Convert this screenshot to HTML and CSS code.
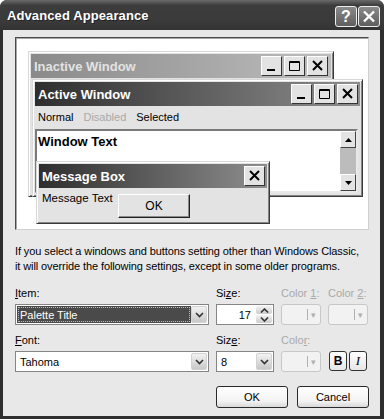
FILE: index.html
```html
<!DOCTYPE html>
<html lang="en">
<head>
  <meta charset="UTF-8">
  <title>Advanced Appearance</title>
  <link rel="stylesheet" href="styles.css">
</head>
<body>
  <div class="dialog">
    <div class="titlebar">
      <span class="title">Advanced Appearance</span>
      <div class="caption-btns">
        <span class="xp-btn help">?</span>
        <span class="xp-btn">
          <svg width="14" height="13" viewBox="0 0 14 13"><path d="M2 1.5 L12 11.5 M12 1.5 L2 11.5" stroke="#fff" stroke-width="2.4"/></svg>
        </span>
      </div>
    </div>

    <div class="body">
      <!-- preview desktop -->
      <div class="preview">
        <div class="win inactive">
          <div class="caption">
            <span>Inactive Window</span>
            <div class="cap-btns">
              <span class="cap-btn"><svg width="19" height="18" viewBox="0 0 19 18"><rect x="5" y="12" width="8" height="2" fill="#000"/></svg></span>
              <span class="cap-btn"><svg width="19" height="18" viewBox="0 0 19 18"><path d="M4.5 4.5 H14.5 V13.5 H4.5 Z M4.5 5.5 H14.5" fill="none" stroke="#000" stroke-width="1"/></svg></span>
              <span class="cap-btn"><svg width="19" height="18" viewBox="0 0 19 18"><path d="M5 4 L14 13 M14 4 L5 13" stroke="#000" stroke-width="2"/></svg></span>
            </div>
          </div>
        </div>

        <div class="win active">
          <div class="caption">
            <span>Active Window</span>
            <div class="cap-btns">
              <span class="cap-btn"><svg width="19" height="18" viewBox="0 0 19 18"><rect x="5" y="12" width="8" height="2" fill="#000"/></svg></span>
              <span class="cap-btn"><svg width="19" height="18" viewBox="0 0 19 18"><path d="M4.5 4.5 H14.5 V13.5 H4.5 Z M4.5 5.5 H14.5" fill="none" stroke="#000" stroke-width="1"/></svg></span>
              <span class="cap-btn"><svg width="19" height="18" viewBox="0 0 19 18"><path d="M5 4 L14 13 M14 4 L5 13" stroke="#000" stroke-width="2"/></svg></span>
            </div>
          </div>
          <div class="menubar">
            <span>Normal</span>
            <span class="disabled">Disabled</span>
            <span>Selected</span>
          </div>
          <div class="textarea">
            <span class="wtext">Window Text</span>
            <div class="scrollbar">
              <span class="sbtn"><svg width="7" height="4" viewBox="0 0 7 4"><path d="M0 4 L3.5 0 L7 4 Z" fill="#000"/></svg></span>
              <span class="track"></span>
              <span class="sbtn"><svg width="7" height="4" viewBox="0 0 7 4"><path d="M0 0 L3.5 4 L7 0 Z" fill="#000"/></svg></span>
            </div>
          </div>
        </div>

        <div class="win msgbox">
          <div class="caption">
            <span>Message Box</span>
            <div class="cap-btns">
              <span class="cap-btn"><svg width="19" height="18" viewBox="0 0 19 18"><path d="M5 4 L14 13 M14 4 L5 13" stroke="#000" stroke-width="2"/></svg></span>
            </div>
          </div>
          <div class="msg-body">
            <span class="msg-text">Message Text</span>
            <span class="classic-btn">OK</span>
          </div>
        </div>
      </div>

      <p class="note">If you select a windows and buttons setting other than Windows Classic,<br>it will override the following settings, except in some older programs.</p>

      <div class="form">
        <div class="field">
          <label><u>I</u>tem:</label>
          <div class="combo">
            <span class="combo-value selected"><span class="focus">Palette Title</span></span>
            <span class="drop"><svg width="9" height="6" viewBox="0 0 9 6"><path d="M1 1 L4.5 4.5 L8 1" fill="none" stroke="#333" stroke-width="1.6"/></svg></span>
          </div>
        </div>
        <div class="field">
          <label>Si<u>z</u>e:</label>
          <div class="combo spin">
            <span class="combo-value right">17</span>
            <span class="spinner">
              <span class="sp"><svg width="9" height="5" viewBox="0 0 9 5"><path d="M1 4.5 L4.5 1 L8 4.5" fill="none" stroke="#333" stroke-width="1.6"/></svg></span>
              <span class="sp"><svg width="9" height="5" viewBox="0 0 9 5"><path d="M1 0.5 L4.5 4 L8 0.5" fill="none" stroke="#333" stroke-width="1.6"/></svg></span>
            </span>
          </div>
        </div>
        <div class="field">
          <label class="disabled">Color <u>1</u>:</label>
          <div class="color-btn"><span class="bar"></span><span class="arr">▾</span></div>
        </div>
        <div class="field">
          <label class="disabled">Color <u>2</u>:</label>
          <div class="color-btn"><span class="bar"></span><span class="arr">▾</span></div>
        </div>

        <div class="field">
          <label><u>F</u>ont:</label>
          <div class="combo">
            <span class="combo-value">Tahoma</span>
            <span class="drop"><svg width="9" height="6" viewBox="0 0 9 6"><path d="M1 1 L4.5 4.5 L8 1" fill="none" stroke="#333" stroke-width="1.6"/></svg></span>
          </div>
        </div>
        <div class="field">
          <label>Siz<u>e</u>:</label>
          <div class="combo">
            <span class="combo-value">8</span>
            <span class="drop"><svg width="9" height="6" viewBox="0 0 9 6"><path d="M1 1 L4.5 4.5 L8 1" fill="none" stroke="#333" stroke-width="1.6"/></svg></span>
          </div>
        </div>
        <div class="field">
          <label class="disabled">Colo<u>r</u>:</label>
          <div class="color-btn"><span class="bar"></span><span class="arr">▾</span></div>
        </div>
        <div class="field">
          <label>&nbsp;</label>
          <div class="style-btns">
            <span class="sbtn-xp bold">B</span>
            <span class="sbtn-xp italic">I</span>
          </div>
        </div>
      </div>

      <div class="actions">
        <button class="xp-push">OK</button>
        <button class="xp-push">Cancel</button>
      </div>
    </div>
  </div>
</body>
</html>
```

FILE: styles.css
```css
body {
  margin: 0;
  background: #fff;
  font-family: "Liberation Sans", Arial, sans-serif;
  font-size: 11px;
  color: #000;
}
.dialog {
  width: 384px;
  height: 419px;
  background: #2e2e2e;
  border-radius: 7px 7px 0 0;
  display: flex;
  flex-direction: column;
}
.titlebar {
  height: 30px;
  display: flex;
  align-items: center;
  justify-content: space-between;
  padding: 0 4px 0 7px;
  border-radius: 7px 7px 0 0;
  background: linear-gradient(#6a6a6a, #3c3c3c 18%, #3a3a3a 70%, #333);
}
.title {
  color: #fff;
  font-weight: bold;
  font-size: 13px;
  letter-spacing: 0.1px;
  text-shadow: 1px 1px 0 #222;
}
.caption-btns {
  display: flex;
  gap: 1px;
  margin-top: 3px;
}
.xp-btn {
  width: 20px;
  height: 19px;
  border: 1px solid #eee;
  border-radius: 3px;
  background: linear-gradient(#8a8a8a, #5e5e5e);
  display: flex;
  align-items: center;
  justify-content: center;
  color: #fff;
  font-weight: bold;
  font-size: 16px;
}
.body {
  flex: 1;
  margin: 0 4px 3px 3px;
  background: #e8e8e8;
  display: flex;
  flex-direction: column;
}

/* preview */
.preview {
  position: relative;
  margin: 7px 0 0 12px;
  width: 352px;
  height: 191px;
  background: #fff;
  border: 1px solid;
  border-color: #4a4a4a #cfcfcf #cfcfcf #4a4a4a;
  box-shadow: inset 1px 1px 0 #a8a8a8;
}
.win {
  position: absolute;
  box-sizing: border-box;
  background: #e3e3e3;
  border: 1px solid;
  border-color: #d8d8d8 #3a3a3a #3a3a3a #d8d8d8;
  box-shadow: inset 1px 1px 0 #fff, inset -1px -1px 0 #858585;
  padding: 2px;
  display: flex;
  flex-direction: column;
}
.inactive { left: 12px; top: 13px; width: 306px; height: 146px; }
.active { left: 16px; top: 41px; width: 331px; height: 118px; }
.msgbox { left: 20px; top: 123px; width: 234px; height: 63px; }

.caption {
  height: 24px;
  display: flex;
  align-items: center;
  justify-content: space-between;
  padding: 0 2px 0 3px;
  font-weight: bold;
  font-size: 13px;
  color: #fff;
  background: linear-gradient(90deg, #2e2e2e, #8e8e8e);
}
.inactive .caption {
  background: linear-gradient(90deg, #8a8a8a, #bdbdbd);
  color: #e2e2e2;
  padding-right: 3px;
}
.cap-btns {
  display: flex;
  gap: 2px;
}
.cap-btn {
  width: 19px;
  height: 18px;
  background: #e3e3e3;
  border: 1px solid;
  border-color: #fff #333 #333 #fff;
  display: flex;
}
.menubar {
  height: 22px;
  display: flex;
  align-items: center;
  gap: 10px;
  padding-left: 3px;
}
.disabled { color: #a9a9a9; }
.textarea {
  flex: 1;
  margin: 1px 2px 1px 0;
  background: #fff;
  border: 2px solid;
  border-color: #7a7a7a #e8e8e8 #e8e8e8 #7a7a7a;
  display: flex;
  justify-content: space-between;
}
.wtext {
  font-weight: bold;
  font-size: 13px;
  padding: 3px 0 0 1px;
}
.scrollbar {
  width: 16px;
  display: flex;
  flex-direction: column;
}
.sbtn {
  height: 15px;
  background: #e3e3e3;
  border: 1px solid;
  border-color: #fff #444 #444 #fff;
  display: flex;
  align-items: center;
  justify-content: center;
}
.track {
  flex: 1;
  background: #bcbcbc;
}
.msg-body {
  flex: 1;
  display: flex;
  align-items: flex-start;
}
.msg-text {
  box-sizing: border-box;
  width: 79px;
  padding: 4px 0 0 3px;
  font-size: 11.5px;
}
.classic-btn {
  margin-top: 6px;
  box-sizing: border-box;
  width: 72px;
  height: 24px;
  display: flex;
  align-items: center;
  justify-content: center;
  font-size: 12px;
  background: #e3e3e3;
  border: 1px solid;
  border-color: #fff #222 #222 #fff;
  box-shadow: inset -1px -1px 0 #8a8a8a;
}

/* note */
.note {
  margin: 14px 0 0 12px;
  line-height: 15px;
  letter-spacing: -0.1px;
}

/* form */
.form {
  margin: 13px 0 0 12px;
  display: grid;
  grid-template-columns: 194px 58px 40px 40px;
  column-gap: 7px;
  row-gap: 9px;
}
.field {
  display: flex;
  flex-direction: column;
}
.field label {
  line-height: 13px;
  margin-bottom: 4px;
}
.combo {
  box-sizing: border-box;
  height: 21px;
  border: 1px solid #858585;
  background: #fff;
  display: flex;
  padding: 1px;
}
.combo-value {
  flex: 1;
  display: flex;
  align-items: center;
  padding-left: 3px;
}
.combo-value.right {
  justify-content: flex-end;
  padding-right: 5px;
}
.combo-value.selected {
  background: #4a4a4a;
  color: #fff;
  padding: 1px;
}
.focus {
  flex: 1;
  align-self: stretch;
  display: flex;
  align-items: center;
  border: 1px dotted #bbb;
  padding-left: 1px;
}
.drop {
  width: 16px;
  border-radius: 2px;
  background: linear-gradient(#f2f2f2, #c8c8c8);
  border: 1px solid #d2d2d2;
  box-sizing: border-box;
  display: flex;
  align-items: center;
  justify-content: center;
}
.spinner {
  width: 16px;
  display: flex;
  flex-direction: column;
  gap: 1px;
}
.sp {
  flex: 1;
  border-radius: 2px;
  background: linear-gradient(#f2f2f2, #cccccc);
  display: flex;
  align-items: center;
  justify-content: center;
}
.color-btn {
  box-sizing: border-box;
  height: 21px;
  border: 1px solid #c8c8c8;
  border-radius: 3px;
  background: #f2f2f2;
  display: flex;
  align-items: center;
  justify-content: flex-end;
  padding-right: 4px;
  gap: 3px;
  color: #b0b0b0;
  font-size: 9px;
}
.color-btn .bar {
  width: 1px;
  height: 11px;
  background: #b0b0b0;
}
.style-btns {
  display: flex;
  gap: 2px;
  margin-left: 1px;
}
.sbtn-xp {
  box-sizing: border-box;
  width: 18px;
  height: 20px;
  border: 1px solid #333;
  border-radius: 3px;
  background: linear-gradient(#fff, #e6e6e6);
  display: flex;
  align-items: center;
  justify-content: center;
  font-size: 12px;
}
.bold { font-weight: bold; }
.italic {
  font-style: italic;
  font-family: "Liberation Serif", serif;
  font-size: 13px;
}

/* buttons */
.actions {
  margin: 14px 11px 0 0;
  display: flex;
  justify-content: flex-end;
  gap: 9px;
}
.xp-push {
  width: 72px;
  height: 22px;
  font-family: "Liberation Sans", Arial, sans-serif;
  font-size: 11px;
  border: 1px solid #2a2a2a;
  border-radius: 3px;
  background: linear-gradient(#fff, #f3f3f3 70%, #d8d8d8);
  padding: 0;
}
```
